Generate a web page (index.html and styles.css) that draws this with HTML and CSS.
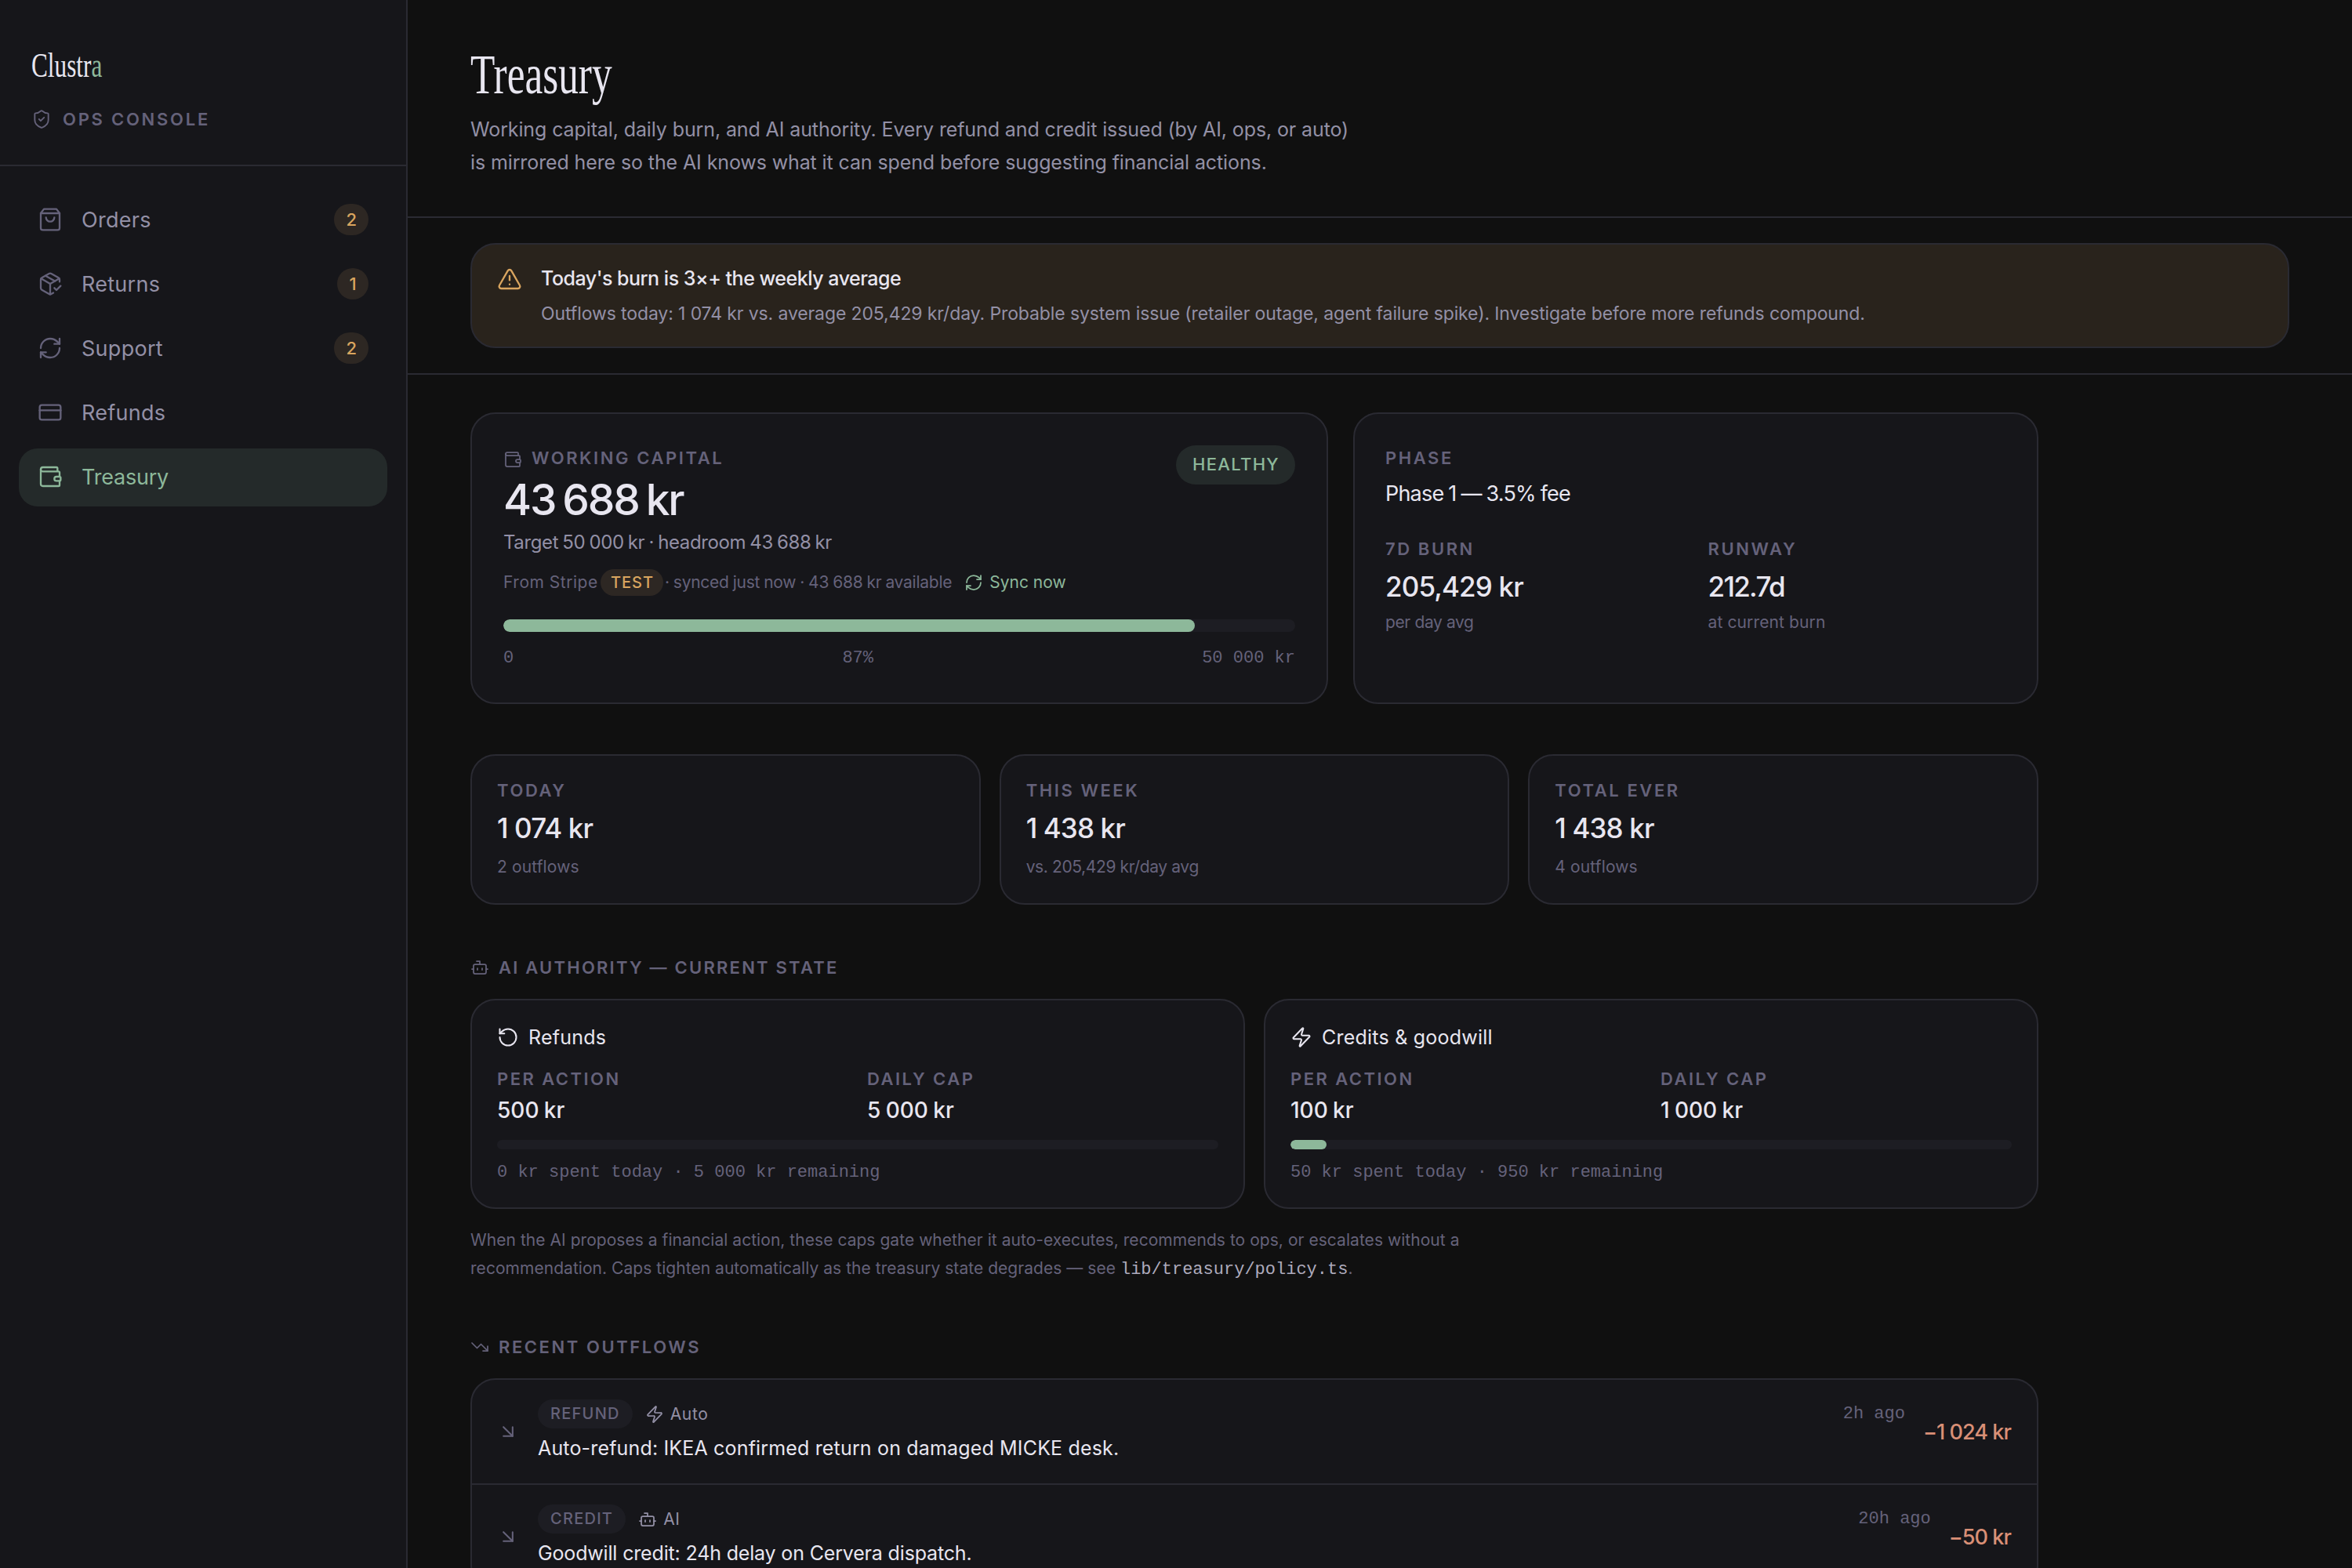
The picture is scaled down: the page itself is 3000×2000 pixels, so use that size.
FILE: index.html
```
<!DOCTYPE html>
<html lang="en">
<head>
  <meta charset="UTF-8">
  <meta name="viewport" content="width=device-width, initial-scale=1.0">
  <title>Clustra Ops – Treasury</title>
  <link rel="stylesheet" href="styles.css">
</head>
<body>
  <!-- icon sprite -->
  <svg class="sprite" xmlns="http://www.w3.org/2000/svg">
    <symbol id="i-bag" viewBox="0 0 24 24"><path d="M6 2 3 6v14a2 2 0 0 0 2 2h14a2 2 0 0 0 2-2V6l-3-4Z"/><path d="M3 6h18"/><path d="M16 10a4 4 0 0 1-8 0"/></symbol>
    <symbol id="i-package" viewBox="0 0 24 24"><path d="m16 16 2 2 4-4"/><path d="M21 10V8a2 2 0 0 0-1-1.73l-7-4a2 2 0 0 0-2 0l-7 4A2 2 0 0 0 3 8v8a2 2 0 0 0 1 1.73l7 4a2 2 0 0 0 2 0l2-1.14"/><path d="m7.5 4.27 9 5.15"/><path d="M3.29 7 12 12l8.71-5"/><path d="M12 22V12"/></symbol>
    <symbol id="i-refresh" viewBox="0 0 24 24"><path d="M3 12a9 9 0 0 1 9-9 9.75 9.75 0 0 1 6.74 2.74L21 8"/><path d="M21 3v5h-5"/><path d="M21 12a9 9 0 0 1-9 9 9.75 9.75 0 0 1-6.74-2.74L3 16"/><path d="M8 16H3v5"/></symbol>
    <symbol id="i-card" viewBox="0 0 24 24"><rect x="2" y="5" width="20" height="14" rx="2"/><path d="M2 10h20"/></symbol>
    <symbol id="i-wallet" viewBox="0 0 24 24"><path d="M19 7V4a1 1 0 0 0-1-1H5a2 2 0 0 0 0 4h15a1 1 0 0 1 1 1v4h-3a2 2 0 0 0 0 4h3a1 1 0 0 0 1-1v-2a1 1 0 0 0-1-1"/><path d="M3 5v14a2 2 0 0 0 2 2h15a1 1 0 0 0 1-1v-4"/></symbol>
    <symbol id="i-shield" viewBox="0 0 24 24"><path d="M20 13c0 5-3.5 7.5-7.66 8.95a1 1 0 0 1-.67-.01C7.5 20.5 4 18 4 13V6a1 1 0 0 1 1-1c2 0 4.5-1.2 6.24-2.72a1.17 1.17 0 0 1 1.52 0C14.51 3.81 17 5 19 5a1 1 0 0 1 1 1z"/><path d="m9 12 2 2 4-4"/></symbol>
    <symbol id="i-alert" viewBox="0 0 24 24"><path d="m21.73 18-8-14a2 2 0 0 0-3.48 0l-8 14A2 2 0 0 0 4 21h16a2 2 0 0 0 1.73-3"/><path d="M12 9v4"/><path d="M12 17h.01"/></symbol>
    <symbol id="i-bot" viewBox="0 0 24 24"><path d="M12 8V4H8"/><rect x="4" y="8" width="16" height="12" rx="2"/><path d="M2 14h2"/><path d="M20 14h2"/><path d="M15 13v2"/><path d="M9 13v2"/></symbol>
    <symbol id="i-rotate" viewBox="0 0 24 24"><path d="M3 12a9 9 0 1 0 9-9 9.75 9.75 0 0 0-6.74 2.74L3 8"/><path d="M3 3v5h5"/></symbol>
    <symbol id="i-zap" viewBox="0 0 24 24"><path d="M4 14a1 1 0 0 1-.78-1.63l9.9-10.2a.5.5 0 0 1 .86.46l-1.92 6.02A1 1 0 0 0 13 10h7a1 1 0 0 1 .78 1.63l-9.9 10.2a.5.5 0 0 1-.86-.46l1.92-6.02A1 1 0 0 0 11 14z"/></symbol>
    <symbol id="i-trend" viewBox="0 0 24 24"><path d="M16 17h6v-6"/><path d="m22 17-8.5-8.5-5 5L2 7"/></symbol>
    <symbol id="i-arrow" viewBox="0 0 24 24"><path d="m7 7 10 10"/><path d="M17 7v10H7"/></symbol>
  </svg>

  <div class="app">
    <aside class="sidebar">
      <div class="brand">
        <div class="logo"><span>Clustr<em>a</em></span></div>
        <div class="console"><svg class="icon"><use href="#i-shield"/></svg><span class="label">OPS CONSOLE</span></div>
      </div>
      <nav class="nav">
        <a class="nav-item"><svg class="icon"><use href="#i-bag"/></svg><span>Orders</span><b class="count">2</b></a>
        <a class="nav-item"><svg class="icon"><use href="#i-package"/></svg><span>Returns</span><b class="count">1</b></a>
        <a class="nav-item"><svg class="icon"><use href="#i-refresh"/></svg><span>Support</span><b class="count">2</b></a>
        <a class="nav-item"><svg class="icon"><use href="#i-card"/></svg><span>Refunds</span></a>
        <a class="nav-item active"><svg class="icon"><use href="#i-wallet"/></svg><span>Treasury</span></a>
      </nav>
    </aside>

    <main class="main">
      <header class="page-header">
        <h1><span>Treasury</span></h1>
        <p>Working capital, daily burn, and AI authority. Every refund and credit issued (by AI, ops, or auto)<br>is mirrored here so the AI knows what it can spend before suggesting financial actions.</p>
      </header>

      <section class="alert-section">
        <div class="alert">
          <svg class="icon"><use href="#i-alert"/></svg>
          <div>
            <div class="alert-title">Today's burn is 3×+ the weekly average</div>
            <div class="alert-text">Outflows today: 1&nbsp;074 kr vs. average 205,429 kr/day. Probable system issue (retailer outage, agent failure spike). Investigate before more refunds compound.</div>
          </div>
        </div>
      </section>

      <div class="content">
        <div class="top-cards">
          <div class="card capital">
            <div class="capital-head">
              <div class="label-row"><svg class="icon"><use href="#i-wallet"/></svg><span class="label">WORKING CAPITAL</span></div>
              <span class="pill healthy">HEALTHY</span>
            </div>
            <div class="balance">43 688 kr</div>
            <div class="target">Target 50 000 kr · headroom 43 688 kr</div>
            <div class="stripe">
              <span class="from">From Stripe</span>
              <span class="pill test">TEST</span>
              <span class="synced">· synced just now · 43 688 kr available</span>
              <a class="sync"><svg class="icon"><use href="#i-refresh"/></svg>Sync now</a>
            </div>
            <div class="bar"><div class="fill" style="width: 87.376%"></div></div>
            <div class="scale"><span>0</span><span>87%</span><span>50 000 kr</span></div>
          </div>

          <div class="card phase">
            <div class="label">PHASE</div>
            <div class="phase-name">Phase 1 — 3.5% fee</div>
            <div class="phase-grid">
              <div>
                <div class="label">7D BURN</div>
                <div class="figure">205,429 kr</div>
                <div class="note narrow">per day avg</div>
              </div>
              <div>
                <div class="label">RUNWAY</div>
                <div class="figure tight">212.7d</div>
                <div class="note">at current burn</div>
              </div>
            </div>
          </div>
        </div>

        <div class="stats">
          <div class="card stat">
            <div class="label">TODAY</div>
            <div class="figure">1 074 kr</div>
            <div class="note">2 outflows</div>
          </div>
          <div class="card stat">
            <div class="label">THIS WEEK</div>
            <div class="figure">1 438 kr</div>
            <div class="note narrow">vs. 205,429 kr/day avg</div>
          </div>
          <div class="card stat">
            <div class="label">TOTAL EVER</div>
            <div class="figure">1 438 kr</div>
            <div class="note">4 outflows</div>
          </div>
        </div>

        <h2 class="section-title authority-title"><svg class="icon"><use href="#i-bot"/></svg><span class="label">AI AUTHORITY — CURRENT STATE</span></h2>
        <div class="authority">
          <div class="card cap">
            <div class="cap-title"><svg class="icon"><use href="#i-rotate"/></svg>Refunds</div>
            <div class="cap-grid">
              <div><div class="label">PER ACTION</div><div class="amount">500 kr</div></div>
              <div><div class="label">DAILY CAP</div><div class="amount">5 000 kr</div></div>
            </div>
            <div class="bar small"><div class="fill" style="width: 0%"></div></div>
            <div class="spent">0 kr spent today · 5 000 kr remaining</div>
          </div>
          <div class="card cap">
            <div class="cap-title"><svg class="icon"><use href="#i-zap"/></svg>Credits &amp; goodwill</div>
            <div class="cap-grid">
              <div><div class="label">PER ACTION</div><div class="amount">100 kr</div></div>
              <div><div class="label">DAILY CAP</div><div class="amount">1 000 kr</div></div>
            </div>
            <div class="bar small"><div class="fill" style="width: 5%"></div></div>
            <div class="spent">50 kr spent today · 950 kr remaining</div>
          </div>
        </div>
        <p class="policy">When the AI proposes a financial action, these caps gate whether it auto-executes, recommends to ops, or escalates without a<br>recommendation. Caps tighten automatically as the treasury state degrades — see <code>lib/treasury/policy.ts</code>.</p>

        <h2 class="section-title recent-title"><svg class="icon"><use href="#i-trend"/></svg><span class="label">RECENT OUTFLOWS</span></h2>
        <div class="outflows">
          <div class="outflow">
            <svg class="icon arrow"><use href="#i-arrow"/></svg>
            <div class="outflow-body">
              <div class="outflow-meta">
                <span class="pill kind">REFUND</span>
                <span class="actor"><svg class="icon"><use href="#i-zap"/></svg>Auto</span>
                <span class="time">2h ago</span>
              </div>
              <div class="outflow-text">Auto-refund: IKEA confirmed return on damaged MICKE desk.</div>
            </div>
            <div class="outflow-amount">−1 024 kr</div>
          </div>
          <div class="outflow">
            <svg class="icon arrow"><use href="#i-arrow"/></svg>
            <div class="outflow-body">
              <div class="outflow-meta">
                <span class="pill kind">CREDIT</span>
                <span class="actor"><svg class="icon"><use href="#i-bot"/></svg>AI</span>
                <span class="time">20h ago</span>
              </div>
              <div class="outflow-text second">Goodwill credit: 24h delay on Cervera dispatch.</div>
            </div>
            <div class="outflow-amount">−50 kr</div>
          </div>
        </div>
      </div>
    </main>
  </div>
</body>
</html>
```
FILE: styles.css
```
:root {
  --bg: #101010;
  --surface: #16161a;
  --raised: #1d1d23;
  --border: #2a2a32;
  --text: #e8e6f0;
  --text-2: #9390a6;
  --muted: #65627a;
  --green: #8db89a;
  --green-bg: #242a2a;
  --amber: #d9a55f;
  --amber-bg: #2d2723;
  --red: #d98f76;
}
* {
  box-sizing: border-box;
}
body {
  margin: 0;
  height: 2000px;
  overflow: hidden;
  background: var(--bg);
  color: var(--text);
  font-family: Inter, "Liberation Sans", sans-serif;
}
h1, h2, p {
  margin: 0;
  font-weight: 400;
}
.sprite {
  display: none;
}
.icon {
  width: 24px;
  height: 24px;
  flex: none;
  fill: none;
  stroke: currentColor;
  stroke-width: 1.75;
  stroke-linecap: round;
  stroke-linejoin: round;
}
.app {
  display: flex;
  height: 2000px;
  overflow: hidden;
}
.label {
  font-size: 22px;
  font-weight: 600;
  letter-spacing: 0.117em;
  color: var(--muted);
  white-space: nowrap;
}

/* sidebar */
.sidebar {
  width: 520px;
  flex: none;
  background: var(--surface);
  border-right: 2px solid var(--border);
}
.brand {
  height: 212px;
  padding: 60px 40px 0;
  border-bottom: 2px solid var(--border);
}
.logo {
  font-family: "Liberation Serif", serif;
  font-size: 44px;
  line-height: 48px;
}
.logo span, h1 span {
  display: inline-block;
  transform: scaleX(0.71);
  transform-origin: left;
}
.logo em {
  font-style: normal;
  color: var(--green);
}
.console {
  display: flex;
  align-items: center;
  gap: 14px;
  height: 30px;
  margin-top: 29px;
  color: var(--muted);
}
.console .label {
  letter-spacing: 0.125em;
}
.console .icon {
  width: 26px;
  height: 26px;
}
.nav {
  display: flex;
  flex-direction: column;
  gap: 8px;
  padding: 32px 24px;
}
.nav-item {
  display: flex;
  align-items: center;
  gap: 24px;
  height: 74px;
  padding: 0 24px 2px;
  border-radius: 24px;
  font-size: 27px;
  letter-spacing: 0.01em;
  color: var(--text-2);
}
.nav-item .icon {
  width: 32px;
  height: 32px;
  color: var(--muted);
}
.nav-item.active {
  background: var(--green-bg);
  color: var(--green);
  letter-spacing: -0.008em;
}
.nav-item.active .icon {
  color: var(--green);
}
.count {
  min-width: 40px;
  margin-left: auto;
  padding: 0 15px;
  border-radius: 20px;
  background: var(--amber-bg);
  color: var(--amber);
  font-size: 22px;
  font-weight: 500;
  line-height: 40px;
  letter-spacing: 0;
  text-align: center;
}

/* header and alert */
.main {
  flex: 1;
  min-width: 0;
}
.page-header {
  height: 278px;
  padding: 55px 80px 0;
  border-bottom: 2px solid var(--border);
}
h1 {
  font-family: "Liberation Serif", serif;
  font-size: 71px;
  line-height: 80px;
}
h1 span {
  transform: scaleX(0.723);
}
.page-header p {
  margin-top: 9px;
  font-size: 25px;
  line-height: 42px;
  letter-spacing: -0.0045em;
  color: var(--text-2);
}
.alert-section {
  padding: 32px 80px;
  border-bottom: 2px solid var(--border);
}
.alert {
  display: flex;
  gap: 24px;
  height: 134px;
  padding: 24px 32px;
  border: 2px solid var(--border);
  border-radius: 32px;
  background: #29231c;
}
.alert .icon {
  width: 32px;
  height: 32px;
  margin-top: 4px;
  color: var(--amber);
}
.alert-title {
  font-size: 25px;
  font-weight: 500;
  line-height: 38px;
  letter-spacing: -0.0195em;
}
.alert-text {
  margin-top: 8px;
  font-size: 23px;
  line-height: 36px;
  letter-spacing: -0.0048em;
  color: var(--text-2);
  white-space: nowrap;
}

/* cards */
.content {
  width: 2160px;
  padding: 48px 80px;
}
.card {
  border: 2px solid var(--border);
  border-radius: 32px;
  background: var(--surface);
}
.pill {
  border-radius: 999px;
  font-weight: 500;
  white-space: nowrap;
}
.top-cards {
  display: grid;
  grid-template-columns: 1094fr 874fr;
  gap: 32px;
}
.top-cards .card {
  height: 372px;
  padding: 40px;
}
.capital-head {
  display: flex;
  justify-content: space-between;
  height: 32px;
}
.label-row {
  display: flex;
  align-items: center;
  gap: 12px;
  color: var(--muted);
}
.label-row .icon {
  margin-top: 4px;
}
.healthy {
  height: 50px;
  padding: 0 20px 0 21px;
  background: var(--green-bg);
  color: var(--green);
  font-size: 22px;
  line-height: 49px;
  letter-spacing: 0.06em;
}
.balance {
  font-size: 55px;
  font-weight: 500;
  line-height: 75px;
  letter-spacing: -0.04em;
  word-spacing: -0.06em;
}
.target {
  font-size: 24px;
  line-height: 33px;
  letter-spacing: -0.016em;
  word-spacing: -0.05em;
  color: var(--text-2);
}
.stripe {
  display: flex;
  align-items: center;
  height: 34px;
  margin-top: 18px;
  font-size: 21px;
  line-height: 32px;
  color: var(--muted);
  white-space: nowrap;
}
.from {
  width: 124px;
  letter-spacing: 0.025em;
}
.test {
  width: 80px;
  padding-left: 13px;
  background: var(--amber-bg);
  color: var(--amber);
  font-size: 20px;
  line-height: 34px;
  letter-spacing: 0.05em;
}
.synced {
  margin-left: 2px;
  letter-spacing: -0.012em;
  word-spacing: -0.03em;
}
.sync {
  display: flex;
  align-items: center;
  gap: 8px;
  margin-left: 16px;
  color: var(--green);
}
.bar {
  height: 16px;
  margin-top: 30px;
  border-radius: 8px;
  background: var(--raised);
  overflow: hidden;
}
.bar.small {
  height: 12px;
  margin-top: 18px;
  border-radius: 6px;
}
.fill {
  height: 100%;
  border-radius: inherit;
  background: var(--green);
}
.scale, .spent, .time, code {
  font-family: "Liberation Mono", monospace;
  font-size: 22px;
}
.scale {
  display: flex;
  justify-content: space-between;
  margin-top: 18px;
  line-height: 32px;
  color: var(--muted);
}
.phase {
  padding-left: 39px !important;
}
.phase > .label {
  line-height: 32px;
}
.phase-name {
  margin-top: 10px;
  font-size: 27px;
  line-height: 40px;
  letter-spacing: -0.03em;
  word-spacing: -0.03em;
}
.phase-grid {
  display: grid;
  grid-template-columns: 1fr 1fr;
  gap: 32px;
  margin-top: 35px;
}
.phase-grid .label {
  line-height: 30px;
}
.figure {
  margin-top: 10px;
  font-size: 35px;
  font-weight: 500;
  line-height: 47px;
  letter-spacing: -0.025em;
}
.figure.tight {
  letter-spacing: -0.048em;
}
.note {
  margin-top: 6px;
  font-size: 21px;
  line-height: 32px;
  letter-spacing: 0.006em;
  color: var(--muted);
}
.note.narrow {
  letter-spacing: -0.018em;
}

/* stat row */
.stats {
  display: grid;
  grid-template-columns: repeat(3, 1fr);
  gap: 24px;
  margin-top: 64px;
}
.stat {
  height: 192px;
  padding: 32px;
}
.stat .label {
  line-height: 24px;
}
.stat .figure {
  margin-top: 13px;
}
.stat .note {
  margin-top: 10px;
}

/* ai authority */
.section-title {
  display: flex;
  align-items: center;
  gap: 12px;
  height: 28px;
  color: var(--muted);
}
.authority-title {
  margin: 66px 0 26px;
}
.authority-title .label {
  letter-spacing: 0.101em;
}
.authority {
  display: grid;
  grid-template-columns: 1fr 1fr;
  gap: 24px;
}
.cap {
  height: 268px;
  padding: 32px;
}
.cap-title {
  display: flex;
  align-items: center;
  gap: 12px;
  height: 30px;
  font-size: 25px;
  letter-spacing: 0.009em;
}
.cap-title .icon {
  width: 28px;
  height: 28px;
}
.cap-grid {
  display: grid;
  grid-template-columns: 1fr 1fr;
  gap: 24px;
  margin-top: 24px;
}
.cap-grid .label {
  line-height: 28px;
  letter-spacing: 0.112em;
}
.amount {
  margin-top: 6px;
  font-size: 28px;
  font-weight: 500;
  line-height: 40px;
  word-spacing: -0.04em;
}
.spent {
  margin-top: 18px;
  line-height: 24px;
  color: var(--muted);
}
.policy {
  margin-top: 22px;
  font-size: 21px;
  line-height: 36px;
  letter-spacing: 0.002em;
  color: var(--muted);
  white-space: nowrap;
}
code {
  letter-spacing: 0;
  line-height: 1;
  color: #aeabbd;
}

/* recent outflows */
.recent-title {
  margin: 68px 0 26px;
}
.outflows {
  border: 2px solid var(--border);
  border-radius: 32px;
  background: var(--surface);
}
.outflow {
  display: flex;
  align-items: center;
  height: 132px;
  padding: 0 33px 0 32px;
}
.outflow + .outflow {
  height: 134px;
  border-top: 2px solid var(--border);
}
.arrow {
  width: 28px;
  height: 28px;
  color: var(--muted);
}
.outflow-body {
  flex: 1;
  margin: 0 23px 0 24px;
}
.outflow-meta {
  display: flex;
  align-items: center;
  height: 38px;
}
.kind {
  padding: 0 16px;
  background: var(--raised);
  color: var(--muted);
  font-size: 20px;
  line-height: 37px;
  letter-spacing: 0.063em;
}
.actor {
  display: flex;
  align-items: center;
  gap: 8px;
  margin-left: 16px;
  font-size: 21px;
  line-height: 36px;
  letter-spacing: 0.03em;
  color: var(--text-2);
}
.time {
  margin-left: auto;
  color: var(--muted);
}
.outflow-text {
  margin-top: 4px;
  font-size: 25px;
  line-height: 41px;
  letter-spacing: 0.0065em;
}
.outflow-text.second {
  letter-spacing: -0.0065em;
}
.outflow-amount {
  font-size: 27px;
  font-weight: 500;
  letter-spacing: -0.035em;
  color: var(--red);
}
```
